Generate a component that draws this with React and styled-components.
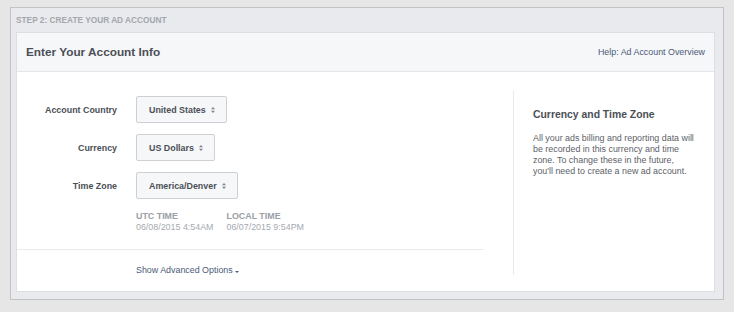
import React from 'react';
import styled, { createGlobalStyle } from 'styled-components';

const GlobalStyle = createGlobalStyle`
  html, body {
    margin: 0;
    padding: 0;
    background: #e6e6e6;
    font-family: "Liberation Sans", Arial, sans-serif;
  }
`;

const Page = styled.div`
  padding: 7px 10px 0 10px;
`;

const Panel = styled.section`
  width: 712px;
  height: 291px;
  border: 1px solid #c2c3c6;
  background: #e9eaed;
  display: flex;
  flex-direction: column;
`;

const StepTitle = styled.div`
  height: 24px;
  padding-left: 5px;
  display: flex;
  align-items: center;
  font-size: 8.3px;
  font-weight: bold;
  color: #a3a6ac;
`;

const Card = styled.div`
  margin: 0 8px 7px 5px;
  flex: 1;
  background: #fff;
  border: 1px solid #dddfe2;
  display: flex;
  flex-direction: column;
`;

const CardHeader = styled.header`
  height: 38px;
  background: #f6f7f9;
  border-bottom: 1px solid #e5e6e9;
  display: flex;
  align-items: center;
  justify-content: space-between;
  padding: 0 9px 0 9px;
`;

const Heading = styled.h1`
  margin: 0;
  font-size: 11.8px;
  font-weight: bold;
  color: #4b4f56;
`;

const HelpLink = styled.a`
  font-size: 8.9px;
  color: #4b5a78;
  text-decoration: none;
`;

const Body = styled.div`
  flex: 1;
  display: flex;
`;

const FormColumn = styled.div`
  width: 496px;
  padding-top: 24px;
  display: flex;
  flex-direction: column;
`;

const FormRows = styled.div`
  display: flex;
  flex-direction: column;
  gap: 11px;
`;

const Row = styled.div`
  display: flex;
  align-items: center;
`;

const Label = styled.label`
  width: 100px;
  text-align: right;
  margin-right: 19px;
  font-size: 8.9px;
  font-weight: bold;
  color: #4b4f56;
`;

const Select = styled.div`
  height: 25px;
  padding: 0 11px 0 12px;
  display: flex;
  align-items: center;
  gap: 5px;
  background: #f6f7f9;
  border: 1px solid #ced0d4;
  border-radius: 2px;
  font-size: 8.9px;
  font-weight: bold;
  color: #4b4f56;
`;

const Arrows = styled.svg`
  width: 4px;
  height: 6px;
  fill: #7f838a;
`;

const TimeBlock = styled.div`
  margin: 12px 0 0 119px;
  display: flex;
  gap: 13px;
`;

const TimeCol = styled.div`
  display: flex;
  flex-direction: column;
  font-size: 8.9px;
  line-height: 11px;
`;

const TimeLabel = styled.span`
  font-weight: bold;
  color: #9a9ea6;
`;

const TimeValue = styled.span`
  color: #a6aab0;
`;

const Divider = styled.hr`
  margin: 16px 29px 0 0;
  border: 0;
  border-top: 1px solid #e9ebee;
`;

const Advanced = styled.a`
  margin: 15px 0 0 119px;
  font-size: 8.9px;
  line-height: 11px;
  color: #4b5a78;
  text-decoration: none;
  display: flex;
  align-items: center;
  gap: 2px;
`;

const Caret = styled.span`
  width: 0;
  height: 0;
  border-left: 2px solid transparent;
  border-right: 2px solid transparent;
  border-top: 2px solid #4b5a78;
  margin-top: 2px;
`;

const Aside = styled.aside`
  flex: 1;
  margin: 18px 0 16px 0;
  border-left: 1px solid #e9ebee;
  padding: 18px 0 0 19px;
`;

const AsideTitle = styled.h2`
  margin: 0;
  font-size: 10.4px;
  line-height: 13px;
  font-weight: bold;
  color: #4b4f56;
`;

const AsideText = styled.p`
  margin: 12px 0 0 0;
  width: 163px;
  font-size: 8.9px;
  line-height: 11px;
  color: #5d6168;
`;

const SelectBox = ({ children }) => (
  <Select>
    {children}
    <Arrows viewBox="0 0 4 6">
      <path d="M2 0 L4 2.3 L0 2.3 Z M0 3.7 L4 3.7 L2 6 Z" />
    </Arrows>
  </Select>
);

const fields = [
  { label: 'Account Country', value: 'United States' },
  { label: 'Currency', value: 'US Dollars' },
  { label: 'Time Zone', value: 'America/Denver' },
];

export default function App() {
  return (
    <Page>
      <GlobalStyle />
      <Panel>
        <StepTitle>STEP 2: CREATE YOUR AD ACCOUNT</StepTitle>
        <Card>
          <CardHeader>
            <Heading>Enter Your Account Info</Heading>
            <HelpLink href="#">Help: Ad Account Overview</HelpLink>
          </CardHeader>
          <Body>
            <FormColumn>
              <FormRows>
                {fields.map(f => (
                  <Row key={f.label}>
                    <Label>{f.label}</Label>
                    <SelectBox>{f.value}</SelectBox>
                  </Row>
                ))}
              </FormRows>
              <TimeBlock>
                <TimeCol>
                  <TimeLabel>UTC TIME</TimeLabel>
                  <TimeValue>06/08/2015 4:54AM</TimeValue>
                </TimeCol>
                <TimeCol>
                  <TimeLabel>LOCAL TIME</TimeLabel>
                  <TimeValue>06/07/2015 9:54PM</TimeValue>
                </TimeCol>
              </TimeBlock>
              <Divider />
              <Advanced href="#">
                Show Advanced Options
                <Caret />
              </Advanced>
            </FormColumn>
            <Aside>
              <AsideTitle>Currency and Time Zone</AsideTitle>
              <AsideText>
                All your ads billing and reporting data will be recorded in this
                currency and time zone. To change these in the future, you'll
                need to create a new ad account.
              </AsideText>
            </Aside>
          </Body>
        </Card>
      </Panel>
    </Page>
  );
}
